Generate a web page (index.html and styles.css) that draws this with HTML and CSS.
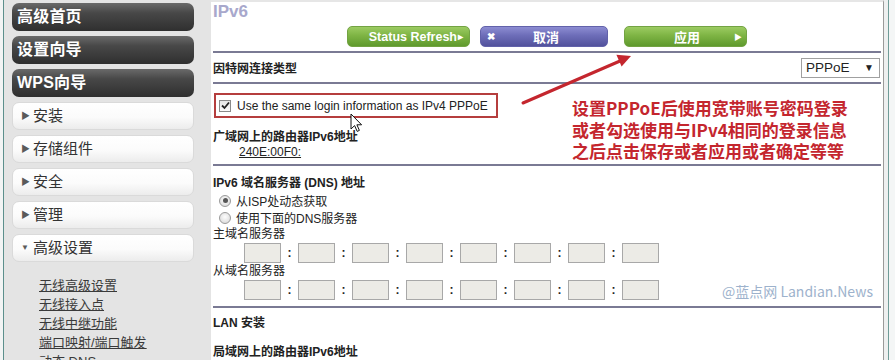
FILE: index.html
```html
<!DOCTYPE html>
<html lang="zh-CN">
<head>
<meta charset="utf-8">
<title>IPv6</title>
<link rel="stylesheet" href="styles.css">
</head>
<body>
<div class="window">
  <aside class="sidebar">
    <div class="nav-dark">高级首页</div>
    <div class="nav-dark">设置向导</div>
    <div class="nav-dark">WPS向导</div>
    <div class="nav-light"><span class="tri">&#9654;</span>安装</div>
    <div class="nav-light"><span class="tri">&#9654;</span>存储组件</div>
    <div class="nav-light"><span class="tri">&#9654;</span>安全</div>
    <div class="nav-light"><span class="tri">&#9654;</span>管理</div>
    <div class="nav-light"><span class="tri down">&#9660;</span>高级设置</div>
    <ul class="sublinks">
      <li><a>无线高级设置</a></li>
      <li><a>无线接入点</a></li>
      <li><a>无线中继功能</a></li>
      <li><a>端口映射/端口触发</a></li>
      <li><a>动态 DNS</a></li>
    </ul>
  </aside>
  <main class="content">
    <h1 class="title">IPv6</h1>
    <div class="actions">
      <div class="btn green refresh">Status Refresh<span class="play-s">&#9656;</span></div>
      <div class="btn purple cancel"><span class="x">&#10006;</span><span class="cancel-label">取消</span></div>
      <div class="btn green apply"><span class="apply-label">应用</span><span class="play">&#9654;</span></div>
    </div>
    <div class="rule"></div>
    <div class="conn-row">
      <span class="bold">因特网连接类型</span>
      <div class="select"><span>PPPoE</span><span class="sel-arrow">&#9660;</span></div>
    </div>
    <div class="rule"></div>
    <div class="hl-box">
      <span class="checkbox"><svg width="9" height="9" viewBox="0 0 9 9"><path d="M1 4.5 L3.5 7 L8 1.5" fill="none" stroke="#222" stroke-width="1.8"/></svg></span>
      <span class="hl-text">Use the same login information as IPv4 PPPoE</span>
    </div>
    <div class="bold wan-label">广域网上的路由器IPv6地址</div>
    <div class="wan-addr"><u>240E:00F0:</u></div>
    <div class="rule rule3"></div>
    <div class="bold dns-label">IPv6 域名服务器 (DNS) 地址</div>
    <div class="radio-row first"><span class="radio on"></span>从ISP处动态获取</div>
    <div class="radio-row"><span class="radio"></span>使用下面的DNS服务器</div>
    <div class="field-label">主域名服务器</div>
    <div class="box-row">
      <span class="box"></span><span class="colon">:</span><span class="box"></span><span class="colon">:</span><span class="box"></span><span class="colon">:</span><span class="box"></span><span class="colon">:</span><span class="box"></span><span class="colon">:</span><span class="box"></span><span class="colon">:</span><span class="box"></span><span class="colon">:</span><span class="box"></span>
    </div>
    <div class="field-label second">从域名服务器</div>
    <div class="box-row">
      <span class="box"></span><span class="colon">:</span><span class="box"></span><span class="colon">:</span><span class="box"></span><span class="colon">:</span><span class="box"></span><span class="colon">:</span><span class="box"></span><span class="colon">:</span><span class="box"></span><span class="colon">:</span><span class="box"></span><span class="colon">:</span><span class="box"></span>
    </div>
    <div class="rule rule4"></div>
    <div class="bold lan-label">LAN 安装</div>
    <div class="bold lan-addr">局域网上的路由器IPv6地址</div>
  </main>
  <div class="gutter"></div>

  <svg class="arrow" width="895" height="360" viewBox="0 0 895 360">
    <line x1="523" y1="103" x2="620" y2="61" stroke="#c4262e" stroke-width="3" stroke-linecap="round"/>
    <polygon points="631,56 621.6,66.6 616.4,54.8" fill="#c4262e"/>
  </svg>
  <div class="note">设置PPPoE后使用宽带账号密码登录<br>或者勾选使用与IPv4相同的登录信息<br>之后点击保存或者应用或者确定等等</div>
  <div class="mark">@蓝点网 Landian.News</div>
  <svg class="cursor" width="14" height="20" viewBox="0 0 14 20">
    <path d="M1 1 L1 16 L4.6 12.6 L7.2 18.4 L9.4 17.4 L6.9 11.8 L11.6 11.8 Z" fill="#fff" stroke="#111" stroke-width="1" stroke-linejoin="round"/>
  </svg>
</div>
</body>
</html>
```
FILE: styles.css
```css
* { box-sizing: border-box; }
html, body { margin: 0; padding: 0; }
body {
  width: 895px;
  height: 360px;
  overflow: hidden;
  background: #f4f6f6;
  font-family: "Liberation Sans", "Noto Sans CJK SC", sans-serif;
  color: #222;
}
.window {
  position: relative;
  display: flex;
  width: 895px;
  height: 360px;
  overflow: hidden;
  border-left: 3px solid #f2f4f4;
}
.sidebar {
  flex: 0 0 208px;
  background: #e4e4e4;
  border-left: 1px solid #5c8f8c;
  padding: 3px 0 0 8px;
}
.nav-dark {
  width: 182px;
  height: 28px;
  margin-bottom: 5px;
  border-radius: 7px;
  background: linear-gradient(#6a6a6a 0%, #484848 35%, #2f2f2f 100%);
  color: #fff;
  font-weight: bold;
  font-size: 16px;
  line-height: 28px;
  padding-left: 5px;
  letter-spacing: 0.2px;
}
.nav-light {
  width: 182px;
  height: 28px;
  margin-bottom: 5px;
  border-radius: 7px;
  background: linear-gradient(#ffffff 0%, #fbfbfb 55%, #ececec 100%);
  border: 1px solid #dadada;
  color: #333;
  font-size: 15px;
  line-height: 26px;
  padding-left: 8px;
  display: flex;
  align-items: center;
}
.tri {
  font-size: 9px;
  color: #5a5a5a;
  width: 12px;
  line-height: 26px;
}
.tri.down { font-size: 8px; }
.sublinks {
  list-style: none;
  margin: 14px 0 0 0;
  padding: 0 0 0 27px;
}
.sublinks li {
  height: 19px;
  line-height: 19px;
  font-size: 13px;
}
.sublinks a {
  color: #3a3a3a;
  text-decoration: underline;
}
.content {
  flex: 0 0 673px;
  background: #fff;
  border-top: 2px solid #e6e6e6;
  border-right: 1px solid #9a9a9a;
  padding: 0 2px 0 2px;
  font-size: 12px;
  position: relative;
}
.gutter {
  flex: 0 0 5px;
  background: #eef0f0;
  border-right: 1px solid #6f9c98;
}
.title {
  margin: 0;
  height: 20px;
  font-size: 17px;
  line-height: 20px;
  font-weight: bold;
  color: #a8a8cc;
}
.actions {
  display: flex;
  margin-top: 4px;
  padding-left: 134px;
  height: 21px;
}
.btn {
  height: 21px;
  border-radius: 5px;
  color: #fff;
  font-weight: bold;
  font-size: 12.5px;
  display: flex;
  align-items: center;
}
.green {
  background: linear-gradient(#9ccb62 0%, #7eb444 45%, #5f9a2d 100%);
  border: 1px solid #73a343;
}
.purple {
  background: linear-gradient(#8c8cd2 0%, #6d6db8 45%, #52529c 100%);
  border: 1px solid #6262aa;
}
.refresh {
  width: 123px;
  justify-content: flex-end;
  padding-right: 6px;
  font-size: 12.5px;
}
.play-s { font-size: 10px; margin-left: 1px; }
.cancel {
  width: 128px;
  margin-left: 10px;
  padding-left: 6px;
}
.x { font-size: 10px; width: 46px; }
.cancel-label { font-size: 13px; }
.apply {
  width: 123px;
  margin-left: 16px;
  padding-left: 49px;
}
.apply-label { font-size: 13px; width: 60px; }
.play { font-size: 8px; }
.rule {
  height: 2px;
  background: #7a7a94;
  margin-top: 4px;
}
.conn-row {
  height: 29px;
  display: flex;
  align-items: center;
  justify-content: space-between;
  padding-right: 1px;
}
.conn-row + .rule { margin-top: 0; }
.bold { font-weight: bold; }
.select {
  width: 79px;
  height: 20px;
  border: 1px solid #a0a0a0;
  display: flex;
  justify-content: space-between;
  align-items: center;
  padding: 0 5px 0 4px;
  font-size: 13.5px;
  color: #222;
}
.sel-arrow { font-size: 10px; }
.hl-box {
  margin-top: 9px;
  margin-left: 1px;
  width: 284px;
  height: 25px;
  border: 2px solid #b53e3e;
  display: flex;
  align-items: center;
  padding-left: 3px;
  white-space: nowrap;
}
.checkbox {
  flex: 0 0 12px;
  width: 12px;
  height: 12px;
  border: 1px solid #8a8a8a;
  background: linear-gradient(#e6e6e6, #fafafa);
  display: flex;
  align-items: center;
  justify-content: center;
  margin-right: 6px;
}
.hl-text {
  font-size: 12px;
  color: #222;
  white-space: nowrap;
}
.wan-label {
  margin-top: 12px;
  line-height: 14px;
  height: 14px;
}
.wan-addr {
  margin-top: 1px;
  line-height: 14px;
  height: 14px;
  padding-left: 26px;
}
.rule3 { margin-top: 5px; }
.dns-label {
  margin-top: 10px;
  line-height: 14px;
  height: 14px;
}
.radio-row {
  height: 17px;
  display: flex;
  align-items: center;
  padding-left: 6px;
}
.radio-row.first { margin-top: 2px; }
.radio {
  width: 12px;
  height: 12px;
  border-radius: 50%;
  border: 1px solid #9a9a9a;
  background: radial-gradient(circle at 50% 40%, #fdfdfd, #d4d4d4);
  margin-right: 5px;
  position: relative;
}
.radio.on::after {
  content: "";
  position: absolute;
  left: 2.5px;
  top: 2.5px;
  width: 5px;
  height: 5px;
  border-radius: 50%;
  background: #555;
}
.field-label {
  line-height: 14px;
  height: 14px;
  margin-top: 1px;
}
.field-label.second { margin-top: 1px; }
.box-row {
  display: flex;
  align-items: center;
  height: 20px;
  margin-top: 2px;
  padding-left: 31px;
}
.box {
  width: 37px;
  height: 20px;
  background: #ecebe6;
  border: 1px solid #a8a8a8;
}
.colon {
  width: 17px;
  height: 20px;
  line-height: 20px;
  text-align: center;
  font-weight: bold;
  font-size: 12px;
}
.rule4 { margin-top: 6px; }
.lan-label {
  margin-top: 8px;
  line-height: 14px;
  height: 14px;
}
.lan-addr {
  margin-top: 15px;
  line-height: 14px;
  height: 14px;
}
.arrow {
  position: absolute;
  left: -3px;
  top: 0;
  pointer-events: none;
}
.note {
  position: absolute;
  left: 569px;
  top: 97px;
  font-size: 17px;
  line-height: 21.5px;
  font-weight: bold;
  color: #c4262e;
  font-family: "Noto Sans CJK SC", sans-serif;
  white-space: nowrap;
}
.mark {
  position: absolute;
  left: 719px;
  top: 281px;
  font-size: 14px;
  color: #9db2cc;
  font-family: "Noto Sans CJK SC", sans-serif;
  white-space: nowrap;
}
.cursor {
  position: absolute;
  left: 347px;
  top: 113px;
}
```
